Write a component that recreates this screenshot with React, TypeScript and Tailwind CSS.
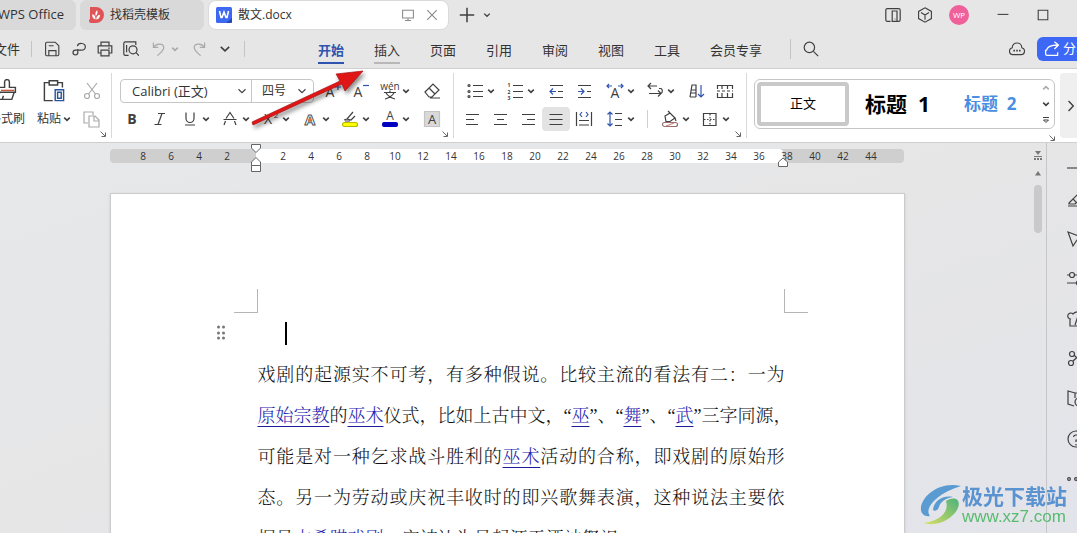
import type { ReactNode } from 'react';

const UI = "font-['Open_Sans','Noto_Sans_CJK_SC',sans-serif]";

function Icon({ children, className = 'size-5', color = '#404040' }: { children: ReactNode; className?: string; color?: string }) {
  return (
    <svg viewBox="0 0 20 20" className={`shrink-0 ${className}`} fill="none" stroke={color} strokeWidth="1.2" aria-hidden="true">
      {children}
    </svg>
  );
}

function Glyph({ children, x = 10, y = 15, size = 14, weight = 400, italic = false, fill = '#404040' }: {
  children: string; x?: number; y?: number; size?: number; weight?: number; italic?: boolean; fill?: string;
}) {
  return (
    <text x={x} y={y} fontSize={size} fontWeight={weight} fontStyle={italic ? 'italic' : 'normal'} textAnchor="middle" fill={fill} stroke="none">
      {children}
    </text>
  );
}

function Chevron({ className = 'size-2', width = 1.6, color = '#404040' }: { className?: string; width?: number; color?: string }) {
  return (
    <svg viewBox="0 0 8 8" className={`shrink-0 ${className}`} fill="none" stroke={color} strokeWidth={width} aria-hidden="true">
      <path d="M1.2 2.6 4 5.3 6.8 2.6" />
    </svg>
  );
}

function Tool({ label, children, className = '' }: { label: string; children: ReactNode; className?: string }) {
  return (
    <button aria-label={label} className={`flex h-6 w-7 shrink-0 items-center justify-center rounded ${className}`}>
      <Icon>{children}</Icon>
    </button>
  );
}

function DropTool({ label, children }: { label: string; children: ReactNode }) {
  return (
    <button aria-label={label} className="flex h-6 w-10 shrink-0 items-center gap-0.5 pl-1.5">
      <Icon>{children}</Icon>
      <Chevron />
    </button>
  );
}

function Launcher({ label }: { label: string }) {
  return (
    <button aria-label={label} className="absolute right-1 bottom-0 size-2">
      <svg viewBox="0 0 8 8" className="size-2" fill="none" stroke="#666" aria-hidden="true">
        <path d="M1.5 1.5 6 6M6.5 2.5v4h-4" />
      </svg>
    </button>
  );
}

function TitleBar() {
  return (
    <header className="flex h-[30px] shrink-0 items-stretch text-[12px] text-[#333]">
      <button className="-ml-1 w-20 shrink-0 rounded-br-md rounded-tr-md bg-[#d9d9d9] text-left text-[13px] whitespace-nowrap">
        <span className="pl-0.5">WPS Office</span>
      </button>
      <button className="ml-1 flex w-[124px] shrink-0 items-center gap-1.5 rounded-md bg-[#d9d9d9] pl-2">
        <svg viewBox="0 0 16 16" className="size-4" aria-hidden="true">
          <path d="M2 0h6a8 8 0 0 1 0 16H3a2 2 0 0 1-2-2v-1l1-1z" fill="#e05458" />
          <path d="M7.600 12.500C5 12 3.800 9.500 4.300 7.200c1.500.3 2.700 1.200 3 2.800zM7.800 9C6.800 6.500 7.600 4.500 9.200 3.200c.8 2.300.3 4-1.400 5.800zM8.300 12.500c-.3-2.500 1-4.300 3.600-4.800.2 2.600-1 4.500-3.600 4.800z" fill="#fff" />
        </svg>
        找稻壳模板
      </button>
      <div className="ml-1 flex w-[241px] shrink-0 items-center rounded-lg border border-[#dadada] bg-white pr-2.5 pl-[7px]">
        <svg viewBox="0 0 16 16" className="size-4" aria-hidden="true">
          <rect width="16" height="16" rx="1.500" fill="#3d68f2" />
          <path d="M10 16l6-5v3.500a1.500 1.500 0 0 1-1.500 1.500z" fill="#2448b8" />
          <path d="M3.500 4l1.500 6.500h1L8 5l2 5.500h1L12.500 4" fill="none" stroke="#fff" strokeWidth="1.600" />
        </svg>
        <span className="ml-1.5 flex-1">散文.docx</span>
        <button aria-label="演示" className="mr-3"><Icon className="size-3" color="#888"><path strokeWidth="1.700" d="M1 2h18v13H1zM10 15v4M5 19h10" /></Icon></button>
        <button aria-label="关闭标签"><Icon className="size-3" color="#888"><path strokeWidth="1.800" d="m2 2 16 16M18 2 2 18" /></Icon></button>
      </div>
      <button aria-label="新建" className="ml-2.5 flex items-center"><Icon className="size-4"><path strokeWidth="1.900" d="M10 1v18M1 10h18" /></Icon></button>
      <button aria-label="标签列表" className="ml-2 flex items-center"><Chevron width={1.3} /></button>
      <div className="ml-auto flex shrink-0 items-center pr-7">
        <button aria-label="侧栏" className="mr-4"><Icon className="size-4"><path strokeWidth="1.500" d="M7 18H3a2 2 0 0 1-2-2V4a2 2 0 0 1 2-2h14a2 2 0 0 1 2 2v12a2 2 0 0 1-2 2H9V5h6v13M13 15h-1" /></Icon></button>
        <button aria-label="应用" className="mr-4"><Icon className="size-4"><path strokeWidth="1.400" d="m10 1 8 4.500v9L10 19l-8-4.500v-9zM5 7l5 3 5-3M10 10v6" /></Icon></button>
        <button className="mr-7 size-5 rounded-full bg-[#f0609a] text-[8px] leading-5 text-white">WP</button>
        <button aria-label="最小化" className="mr-7"><Icon className="size-3"><path strokeWidth="1.800" d="M1 9h18" /></Icon></button>
        <button aria-label="最大化"><Icon className="size-3"><path strokeWidth="1.800" d="M2 2h16v16H2z" /></Icon></button>
      </div>
    </header>
  );
}

const tabs = ['开始', '插入', '页面', '引用', '审阅', '视图', '工具', '会员专享'];

function MenuBar() {
  return (
    <nav className="flex h-[38px] shrink-0 items-center text-[13px] text-[#333]">
      <button className="-ml-1.5 w-[38px] shrink-0 border-r border-[#c4c4c4] text-left leading-4">文件</button>
      <div className="flex w-[213px] shrink-0 items-center border-r border-[#c4c4c4] pl-3">
        <button aria-label="保存" className="mr-[11px]"><Icon className="size-4"><path strokeWidth="1.400" d="M2 3a1.500 1.500 0 0 1 1.500-1.500H14L18.500 6v11a1.500 1.500 0 0 1-1.500 1.500H3.500A1.500 1.500 0 0 1 2 17zM6 18v-6h9v6M6 6h6" /></Icon></button>
        <button aria-label="输出为PDF" className="mr-2.5"><Icon className="size-4"><path strokeWidth="1.500" d="M8 6.500a5 4.200 0 1 1 5 5H5.500a3 3 0 1 0 3 3V10" /></Icon></button>
        <button aria-label="打印" className="mr-2.5"><Icon className="size-4"><path strokeWidth="1.500" d="M5 6V1.500h10V6M5 15H1.500V6h17v9H15M5 11.500h10v7H5zM14 9h2" /></Icon></button>
        <button aria-label="打印预览" className="mr-3"><Icon className="size-4"><path strokeWidth="1.500" d="M7 18H3a2 2 0 0 1-2-2V3a2 2 0 0 1 2-2h13v4M4.500 5v9M16.500 14.500 20 18.500" /><circle cx="12.500" cy="11" r="5" strokeWidth="1.500" /></Icon></button>
        <button aria-label="撤销" className="flex items-center"><Icon className="size-4" color="#aaa"><path strokeWidth="1.500" d="M3 2v6h6M3 8c3-5 12-6 13-.5.500 4-4 7-8 11" /></Icon><Chevron className="ml-1 size-2" color="#aaa" /></button>
        <button aria-label="恢复" className="ml-3"><Icon className="size-4" color="#aaa"><path strokeWidth="1.500" d="M17 2v6h-6M17 8C14 3 5 2 4 7.500 3.500 11.500 8 14.500 12 18.500" /></Icon></button>
        <button aria-label="更多" className="ml-3"><Chevron className="size-3" width={1.1} /></button>
      </div>
      <div className="ml-[73px] flex h-full shrink-0 items-center gap-[30px] self-stretch">
        {tabs.map((t, i) => (
          <button key={t} className={`mt-1 h-[26px] border-b-2 leading-5 whitespace-nowrap ${i === 0 ? 'border-[#2f54b0] font-bold text-[#2f54b0]' : i === 1 ? 'border-[#b8b8b8]' : 'border-transparent'}`}>{t}</button>
        ))}
      </div>
      <span className="ml-7 h-5 w-px bg-[#c4c4c4]" />
      <button aria-label="搜索" className="ml-3"><Icon className="size-4"><circle cx="8" cy="8" r="6.500" strokeWidth="1.500" /><path strokeWidth="1.500" d="m13 13 6 6" /></Icon></button>
      <button aria-label="云同步" className="ml-auto"><Icon className="size-4"><path strokeWidth="1.400" d="M5 17a4.300 4.300 0 0 1-1-8.500C4 4.500 7 2.500 10 2.500s6 2 6 6a4.300 4.300 0 0 1-1 8.500z" /><path strokeWidth="2" strokeDasharray="2 1.500" d="M5.500 12h9" /></Icon></button>
      <button className="ml-3 flex h-6 w-10 shrink-0 items-center gap-[3px] overflow-hidden rounded-l-md bg-[#3d68f5] pl-[7px] whitespace-nowrap text-white">
        <Icon className="size-4" color="#fff"><path strokeWidth="1.600" d="M2 11v5a2 2 0 0 0 2 2h13v-4M3 12c1-5 5-7 14-7M13 1l5 4-5 5" /></Icon>分享
      </button>
    </nav>
  );
}

function Ribbon() {
  return (
    <section aria-label="开始" className="flex h-[75px] shrink-0 items-stretch border-t border-b border-[#cfcfcf] bg-white text-[12px] text-[#333]">
      <div className="relative my-1 flex w-28 shrink-0 items-start border-r border-[#d9d9d9] pt-1.5">
        <button className="-ml-3 flex w-[38px] shrink-0 flex-col items-center gap-1.5 leading-5 whitespace-nowrap">
          <Icon className="size-6"><path d="M8 7V2.500a2 2 0 0 1 4 0V7h5v4H3V7zM4 11l-2 6h12l2-6M6 17l1-3" /><path stroke="#c65b3b" d="M5 9.500h11" /></Icon>
          格式刷
        </button>
        <button className="ml-2.5 flex w-9 shrink-0 flex-col items-center gap-1.5 leading-5 whitespace-nowrap">
          <Icon className="size-6"><path d="M6 3H2v15h7M13 3h4v4M6 1.500h7V5H6z" /><path stroke="#2b579a" d="M11 9h7v9h-7zM13 11h3v5h-3z" /></Icon>
          <span className="flex items-center gap-0.5">粘贴<Chevron /></span>
        </button>
        <div className="ml-1.5 flex flex-col gap-1">
          <button aria-label="剪切" className="flex h-6 w-7 items-center justify-center"><Icon color="#aaa"><circle cx="5" cy="15" r="2.500" /><circle cx="15" cy="15" r="2.500" /><path d="M5 2l8.500 11M15 2 6.500 13" /></Icon></button>
          <button aria-label="复制" className="flex h-6 w-7 items-center justify-center"><Icon color="#aaa"><path d="M6 14H2V3h9v3M7 7h6l4 4v7H7zM12 7v5h5" /></Icon></button>
        </div>
        <Launcher label="剪贴板设置" />
      </div>

      <div className="relative my-1 flex w-[342px] shrink-0 flex-col gap-1 border-r border-[#d9d9d9] pt-1.5 pl-1.5">
        <div className="flex">
          <div className="ml-0.5 flex h-6 w-[194px] shrink-0 rounded border border-[#c6c6c6]">
            <div className="relative w-[131px] border-r border-[#c6c6c6]">
              <select aria-label="字体" className="h-full w-full appearance-none bg-transparent pl-[11px] text-[13px] leading-5 outline-none"><option>Calibri (正文)</option></select>
              <Chevron className="pointer-events-none absolute top-1.5 right-1 size-2.5" width={0.9} />
            </div>
            <div className="relative flex-1">
              <select aria-label="字号" className="h-full w-full appearance-none bg-transparent pl-2.5 text-[12px] leading-5 outline-none"><option>四号</option></select>
              <Chevron className="pointer-events-none absolute top-1.5 right-1.5 size-2.5" width={0.9} />
            </div>
          </div>
          <div className="ml-1 flex">
            <Tool label="增大字号"><Glyph x={8} y={16}>A</Glyph><path stroke="#2f54b0" d="M13 6h6M16 3v6" /></Tool>
            <Tool label="减小字号"><Glyph x={8} y={16}>A</Glyph><path stroke="#2f54b0" d="M13 4.500h6" /></Tool>
            <DropTool label="拼音指南"><Glyph y={9} size={10}>wén</Glyph><path d="M4 11.500h12M10 9.500v2M6 12c2 3 5 5 9 6M14 12c-2 3-5 5-9 6" /></DropTool>
            <Tool label="清除格式" className="ml-1"><path d="M3 11 11 3l6 6-7 7H7zM7 7l6 6M8 17h10" /></Tool>
          </div>
        </div>
        <div className="flex">
          <Tool label="加粗"><Glyph weight={700} y={15} size={14}>B</Glyph></Tool>
          <Tool label="倾斜"><path d="M8 4.500h7M4.500 15.500h7M12 4.500 8 15.500" /></Tool>
          <DropTool label="下划线"><path d="M6 3.500v6a4 4 0 0 0 8 0v-6M5 16h10" /></DropTool>
          <DropTool label="删除线"><path d="M6 9.500 10 3.500l4 6M3.500 10.500h13M5.500 12 4 16M14.500 12l1.500 4" /></DropTool>
          <DropTool label="上标"><Glyph x={8}>X</Glyph><Glyph x={16} y={9} size={8}>2</Glyph></DropTool>
          <DropTool label="文字效果"><text x="10" y="15.500" fontSize="15" fontWeight="700" textAnchor="middle" fill="#fff" stroke="#555" strokeWidth="1">A</text><path stroke="#d77a42" d="m8.500 13 1.500-4 1.500 4" /></DropTool>
          <DropTool label="突出显示"><path d="m4 11 3-1 6-7M7 10l4 1 4-4M5 12h5" /><rect x="2.500" y="13.500" width="15" height="4" rx="2" fill="#ffff00" stroke="#b9b900" /></DropTool>
          <DropTool label="字体颜色"><Glyph y={11} size={12}>A</Glyph><rect x="2" y="13" width="16" height="5" rx="2" fill="#0000c0" stroke="none" /></DropTool>
          <Tool label="字符底纹" className="ml-1"><path d="M2.500 2.500h15v15h-15z" fill="#d9d9d9" stroke="#c4c4c4" /><Glyph size={13}>A</Glyph></Tool>
        </div>
        <Launcher label="字体设置" />
      </div>

      <div className="relative my-1 flex w-[293px] shrink-0 flex-col gap-1 border-r border-[#d9d9d9] pt-1.5 pl-1">
        <div className="flex pl-px">
          <DropTool label="项目符号"><path d="M8 4.500h10M8 10.500h10M8 15.500h10" /><circle cx="4" cy="4.500" r="1" /><circle cx="4" cy="10.500" r="1" /><circle cx="4" cy="15.500" r="1" /></DropTool>
          <DropTool label="编号"><path d="M8 4.500h10M8 10.500h10M8 16.500h10" /><Glyph x={4} y={6} size={5} weight={700}>1</Glyph><Glyph x={4} y={12.5} size={5} weight={700}>2</Glyph><Glyph x={4} y={19} size={5} weight={700}>3</Glyph></DropTool>
          <Tool label="减少缩进" className="ml-[3px]"><path d="M4 4.500h13M12 10.500h5M4 16.500h13" /><path stroke="#2f54b0" d="M10 10.500H4M7 7.500l-3 3 3 3" /></Tool>
          <Tool label="增加缩进"><path d="M4 4.500h13M13 10.500h4M4 16.500h13" /><path stroke="#2f54b0" d="M4 10.500h6M7 7.500l3 3-3 3" /></Tool>
          <span className="w-px" />
          <DropTool label="中文版式"><Glyph y={17} size={14}>A</Glyph><path stroke="#2f54b0" d="M7 5H2M4 3 2 5l2 2M13 5h5M16 3l2 2-2 2" /></DropTool>
          <DropTool label="文字方向"><path d="M6 2 3 5l3 3M3 5h9M4 12.500h12a3 3 0 0 0 0-5h-2M13 9.500l3 3-3 3" /></DropTool>
          <Tool label="排序" className="ml-1"><path d="M3 16 5 4h4v12M4 9h5M3 16h6M4 12h5" /><path stroke="#2f54b0" d="M14 4v12M11 13l3 3 3-3" /></Tool>
          <Tool label="制表位"><path d="M2.500 8V4.500h15V8M2.500 12v4.500h15V12" /><path strokeDasharray="3 2" d="M2 10h16" /><path d="M7 5v3M12.500 5v3M7 12v4M12.500 12v4" /></Tool>
        </div>
        <div className="flex items-center">
          <Tool label="左对齐"><path d="M4 5.500h13M4 10.500h8M4 15.500h12" /></Tool>
          <Tool label="居中"><path d="M4 5.500h13M7 10.500h7M4 15.500h13" /></Tool>
          <Tool label="右对齐"><path d="M4 5.500h13M9 10.500h8M4 15.500h13" /></Tool>
          <Tool label="两端对齐" className="bg-[#e3e3e3]"><path d="M3.500 5.500h13M3.500 10.500h13M3.500 15.500h13" /></Tool>
          <Tool label="分散对齐"><path d="M2.500 3v14M17.500 3v14M5 11.500h10M5 16h10" /><path stroke="#2f54b0" d="M8 3 6 5.500 8 8M12 3l2 2.500L12 8" /></Tool>
          <span className="w-px" />
          <DropTool label="行距"><path d="M10 4.500h7M10 10.500h7M10 16.500h7" /><path stroke="#2f54b0" d="M5 3v14M2.500 5.500 5 3l2.500 2.500M2.500 14.500 5 17l2.500-2.500" /></DropTool>
          <span className="mr-1.5 ml-2 h-[18px] w-px bg-[#d0d0d0]" />
          <DropTool label="底纹"><path d="m5 7 5-3 5 5-5 3.500H6zM10 4 8 2M15 9l1 3" /><rect x="2.500" y="13.500" width="15" height="4" rx="2" stroke="#9b7070" /><path stroke="#d08080" d="m6 17 8-3" /></DropTool>
          <DropTool label="边框"><path d="M3.500 4.500H16v12H3.500z" /><path strokeDasharray="1.500 1.500" d="M10 5v11M4 10.500h12" /></DropTool>
        </div>
        <Launcher label="段落设置" />
      </div>

      <div className="relative flex min-w-0 flex-1 pt-2.5 pl-[7px]">
        <div className="flex h-[50px] w-[301px] items-center rounded-md border border-[#c6c6c6] pl-0.5">
          <button className="h-11 w-[92px] rounded border-4 border-[#c9c9c9] text-[13px] text-black">正文</button>
          <button className="ml-4 text-[21px] leading-7 font-bold whitespace-pre text-black">标题  1</button>
          <button className="ml-[34px] text-[17px] leading-7 font-bold whitespace-pre text-[#4a8ee2]">标题  2</button>
          <div className="mr-1 ml-auto flex flex-col gap-2">
            <button aria-label="上一行" className="flex"><Chevron className="size-2 rotate-180" color="#aaa" /></button>
            <button aria-label="下一行" className="flex"><Chevron /></button>
            <button aria-label="更多样式" className="flex"><svg viewBox="0 0 8 8" className="size-2" fill="none" stroke="#404040" aria-hidden="true"><path d="M1 1.500h6M1.500 4 4 6.500 6.500 4z" /></svg></button>
          </div>
        </div>
        <Launcher label="样式设置" />
      </div>
      <button aria-label="展开样式窗格" className="my-1 flex w-[17px] shrink-0 items-center justify-center rounded-l bg-[#efefef]"><Chevron className="ml-1 size-3.5 -rotate-90" width={0.8} /></button>
    </section>
  );
}

const rulerMarks = [8, 6, 4, 2, 0, ...Array.from({ length: 22 }, (_, i) => (i + 1) * 2)];

function Ruler() {
  return (
    <div className="relative mt-1.5 h-3.5 w-[794px] shrink-0">
      <div className="absolute inset-0 flex overflow-hidden rounded bg-[#cfcfcf]">
        <span className="ml-[146px] w-[527px] rounded-r bg-white" />
      </div>
      <div className="relative flex pl-[19px] text-[10px] leading-3.5 text-[#333]">
        {rulerMarks.map((n, i) => <span key={i} className="w-7 shrink-0 text-center">{n || ''}</span>)}
      </div>
      <svg viewBox="0 0 12 30" className="absolute -top-1.5 left-[140px] h-[30px] w-3" fill="#fff" stroke="#666" aria-hidden="true">
        <path d="M1.500 1.500h9V5L6 9.500 1.500 5zM1.500 22.500V19L6 14.500l4.500 4.500v3.500zM1.500 22.500h9v6h-9z" />
      </svg>
      <svg viewBox="0 0 12 10" className="absolute top-2 left-[667px] h-2.5 w-3" fill="#fff" stroke="#666" aria-hidden="true">
        <path d="M1.500 9.500V5L6 1l4.500 4v4.500z" />
      </svg>
    </div>
  );
}

function Link({ children }: { children: string }) {
  return <a href="#" className="text-[#2424b0] underline decoration-[#1d1d9c] decoration-1 underline-offset-4">{children}</a>;
}

function Line({ children, last = false }: { children: ReactNode; last?: boolean }) {
  return <span className={`block whitespace-nowrap ${last ? '' : '[text-align-last:justify]'}`}>{children}</span>;
}

function Page() {
  return (
    <article className="mt-[30px] min-h-96 w-[795px] flex-1 shrink-0 border border-[#cbcbcb] bg-white pt-[95px] shadow-sm">
      <div className="mr-24 ml-[123px] flex h-6 justify-between">
        <span className="w-6 border-r border-b border-[#b5b5b5]" />
        <span className="w-6 border-b border-l border-[#b5b5b5]" />
      </div>
      <div className="mt-2 flex h-6 items-center pl-[105px]">
        <svg viewBox="0 0 10 16" className="h-4 w-2.5" fill="#777" aria-hidden="true">
          {[2, 8, 13].map((y) => <g key={y}><circle cx="2.500" cy={y} r="1.500" /><circle cx="7.500" cy={y} r="1.500" /></g>)}
        </svg>
        <span className="ml-[59px] h-[23px] w-0.5 bg-black" />
      </div>
      <p className="mt-2.5 mr-[119px] ml-[147px] font-['Liberation_Serif','Noto_Serif_CJK_SC','Noto_Sans_CJK_SC',serif] text-[18px] leading-[41px] font-light text-[#111]">
        <Line>戏剧的起源实不可考，有多种假说。比较主流的看法有二：一为</Line>
        <Line><Link>原始宗教</Link>的<Link>巫术</Link>仪式，比如上古中文，“<Link>巫</Link>”、“<Link>舞</Link>”、“<Link>武</Link>”三字同源，</Line>
        <Line>可能是对一种乞求战斗胜利的<Link>巫术</Link>活动的合称，即戏剧的原始形</Line>
        <Line>态。另一为劳动或庆祝丰收时的即兴歌舞表演，这种说法主要依</Line>
        <Line last>据是<Link>古希腊戏剧</Link>，它被认为是起源于酒神祭祀。</Line>
      </p>
    </article>
  );
}

const sideIcons: [string, ReactNode][] = [
  ['样式', <path d="M1 17h18M2 14 11 5l4 4-7 6H2zM6 10l4 4" />],
  ['选择', <path d="m1 3 16 6-7 2-4 6z" />],
  ['属性', <><circle cx="5" cy="6" r="2.500" /><path d="M0 6h2.500M7.500 6H19M0 14h9" /><circle cx="12" cy="14" r="2.500" /></>],
  ['智能助手', <path d="M4 10a3 3 0 1 1 2-5c2-3 9-3 12 0v12H3v-7M8 16l2-6 2 6 2-5" />],
  ['工具箱', <><circle cx="5" cy="5" r="2.500" /><circle cx="4" cy="14" r="2.500" /><path d="m7 6 10 10M6 12l10-9" /></>],
  ['阅读', <><path d="M7 17 1 15V2l7 2h8v5M8 4v5" /><circle cx="12" cy="13" r="4" /></>],
  ['帮助', <><circle cx="9" cy="10" r="8" /><path d="M6.500 8a2.500 2.500 0 1 1 2.500 3v2M9 15v1.500" /></>],
  ['更多', <><circle cx="2" cy="10" r="1.400" /><circle cx="9" cy="10" r="1.400" /><circle cx="16" cy="10" r="1.400" /></>],
];

function Watermark() {
  return (
    <div className="absolute right-2.5 bottom-1.5 flex items-center opacity-85">
      <svg viewBox="0 0 44 44" className="size-11" aria-hidden="true">
        <defs><linearGradient id="leaf" x1="0" y1="1" x2="1" y2="0"><stop stopColor="#d9df4a" /><stop offset="1" stopColor="#35a968" /></linearGradient></defs>
        <path d="M43 3C22-2 5 12 3 24c-1 7 4 10 9 9-6-7 5-22 31-30z" fill="#438fcd" />
        <path d="M15 27c1-9 9-15 20-13-7 1-13 5-14 10-1 3-4 5-6 3z" fill="#438fcd" />
        <path d="M28 18c10-6 16 0 11 9-6 10-20 17-34 13 13-1 27-9 23-22z" fill="url(#leaf)" />
      </svg>
      <div className="font-['Liberation_Sans','Noto_Sans_CJK_SC',sans-serif]">
        <p className="text-[21px] leading-6 font-bold text-[#4385cb]">极光下载站</p>
        <p className="text-[17px] leading-4 text-[#40b45a]">www.xz7.com</p>
      </div>
    </div>
  );
}

export default function App() {
  return (
    <div className={`relative flex h-screen flex-col overflow-hidden bg-[#e7e6e6] ${UI}`}>
      <TitleBar />
      <MenuBar />
      <Ribbon />
      <main className="flex min-h-0 flex-1 bg-linear-to-br from-[#e6e8e9] via-[#e6e6e7] to-[#e3e4ea]">
        <div className="flex min-w-0 flex-1 flex-col items-center overflow-hidden pr-4">
          <Ruler />
          <Page />
        </div>
        <div className="flex w-4 shrink-0 flex-col items-center pt-2">
          <svg viewBox="0 0 10 10" className="size-2.5" fill="#777" aria-hidden="true"><path d="M2 0h6L5 4zM1 5h8v1H1zM1 7h2v2H1zM4 7h2v2H4zM7 7h2v2H7z" /></svg>
          <svg viewBox="0 0 8 8" className="mt-2 size-2" fill="#777" aria-hidden="true"><path d="M1 6.500 4 2l3 4.500z" /></svg>
          <span className="mt-2 h-12 w-2 rounded-full bg-[#c9c9cb]" />
        </div>
        <aside className="flex w-[31px] shrink-0 flex-col gap-5 overflow-hidden border-l border-[#c6c6c9] pt-6 pl-5">
          <span className="h-0.5 w-5 shrink-0 bg-[#888]" />
          {sideIcons.map(([label, art]) => (
            <button key={label} aria-label={label} className="size-5 shrink-0"><Icon>{art}</Icon></button>
          ))}
        </aside>
      </main>
      <Watermark />
      <svg viewBox="0 0 120 64" className="pointer-events-none absolute top-[66px] left-[248px] h-16 w-[120px] drop-shadow-[2px_3px_2px_rgba(0,0,0,0.45)]" aria-hidden="true">
        <path d="M4 56 92 15 88 8 115 5 97 25 94 18 5 59z" fill="#e01515" stroke="#a81414" strokeWidth=".7" />
      </svg>
    </div>
  );
}
